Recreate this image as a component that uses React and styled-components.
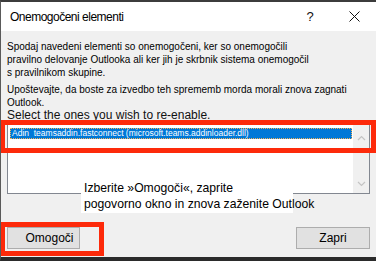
import React from 'react'
import styled, { createGlobalStyle } from 'styled-components'

const GlobalStyle = createGlobalStyle`
  html, body {
    margin: 0;
    padding: 0;
    background: #2b2b2b;
  }
  * { box-sizing: border-box; }
`

const Window = styled.div`
  width: 376px;
  height: 261px;
  display: flex;
  flex-direction: column;
  border-top: 2px solid #3c3c3c;
  border-left: 1px solid #5a5a5a;
  border-bottom: 4px solid #2b2b2b;
  background: #f0f0f0;
  overflow: hidden;
  position: relative;
`

const TitleBar = styled.div`
  height: 29px;
  flex-shrink: 0;
  background: #fff;
  display: flex;
  align-items: center;
  padding-left: 9px;
  font-family: "Liberation Sans", Arial, sans-serif;
  font-size: 12px;
  letter-spacing: -0.5px;
  color: #000;
`

const Title = styled.span`
  flex: 1;
`

const TitleButton = styled.span`
  width: 44px;
  height: 29px;
  display: flex;
  align-items: center;
  justify-content: center;
  font-size: 13px;
  letter-spacing: 0;
  color: #111;
`

const Body = styled.div`
  flex: 1;
  display: flex;
  flex-direction: column;
  padding: 9px 6px 0 6px;
  font-family: "Liberation Sans", Arial, sans-serif;
`

const Note = styled.p`
  margin: 0 0 4px;
  font-size: 10px;
  line-height: 13px;
  color: #000;
  &:last-of-type { margin-bottom: 0; }
`

const Prompt = styled.div`
  font-size: 12px;
  line-height: 13px;
  color: #111;
`

const ListBox = styled.div`
  position: relative;
  margin-top: 2px;
  height: 70px;
  background: #fff;
  border: 1px solid #828790;
  display: flex;
`

const Items = styled.div`
  flex: 1;
  padding: 3px 0 0 2px;
`

const Item = styled.div`
  height: 11px;
  background: ${p => (p.$selected ? '#0078d7' : 'transparent')};
  color: ${p => (p.$selected ? '#fff' : '#000')};
  outline: ${p => (p.$selected ? '1px dotted #f3b25a' : 'none')};
  outline-offset: -1px;
  font-size: 8.5px;
  line-height: 11px;
  padding-left: 2px;
  white-space: pre;
`

const ScrollBar = styled.div`
  width: 17px;
  background: #f0f0f0;
  display: flex;
  flex-direction: column;
  justify-content: space-between;
  align-items: center;
  padding: 10px 0 6px;
  border-left: 1px solid #fff;
`

const Highlight = styled.div`
  position: absolute;
  border: 5px solid #fd2a0a;
  pointer-events: none;
`

const Callout = styled.div`
  position: absolute;
  left: 73px;
  top: 55px;
  width: 212px;
  background: #fff;
  padding: 0 0 1px 3px;
  font-size: 12.2px;
  line-height: 16px;
  color: #000;
  white-space: nowrap;
`

const Footer = styled.div`
  display: flex;
  justify-content: space-between;
  margin-top: 33px;
`

const Button = styled.button`
  width: ${p => p.$w || 74}px;
  height: 22px;
  border: 1px solid #adadad;
  background: #e1e1e1;
  font-family: "Liberation Sans", Arial, sans-serif;
  font-size: 12px;
  color: #000;
  padding: 0 0 0 ${p => p.$shift || 0}px;
`

const Arrow = ({ up }) => (
  <svg width="9" height="6" viewBox="0 0 9 6">
    <path
      d={up ? 'M1 5 L4.5 1.5 L8 5' : 'M1 1 L4.5 4.5 L8 1'}
      fill="none"
      stroke="#c4c4c4"
      strokeWidth="1.2"
    />
  </svg>
)

export default function App() {
  return (
    <>
      <GlobalStyle />
      <Window>
        <TitleBar>
          <Title>Onemogočeni elementi</Title>
          <TitleButton>?</TitleButton>
          <TitleButton>
            <svg width="11" height="11" viewBox="0 0 11 11">
              <path d="M0.5 0.5 L10.5 10.5 M10.5 0.5 L0.5 10.5" stroke="#111" strokeWidth="1" />
            </svg>
          </TitleButton>
        </TitleBar>
        <Body>
          <Note>
            Spodaj navedeni elementi so onemogočeni, ker so onemogočili<br />
            pravilno delovanje Outlooka ali ker jih je skrbnik sistema onemogočil<br />
            s pravilnikom skupine.
          </Note>
          <Note>
            Upoštevajte, da boste za izvedbo teh sprememb morda morali znova zagnati<br />
            Outlook.
          </Note>
          <Prompt>Select the ones you wish to re-enable.</Prompt>
          <ListBox>
            <Items>
              <Item $selected>{'Adin  teamsaddin.fastconnect (microsoft.teams.addinloader.dll)'}</Item>
            </Items>
            <ScrollBar>
              <Arrow up />
              <Arrow />
            </ScrollBar>
            <Callout>
              Izberite »Omogoči«, zaprite<br />
              pogovorno okno in znova zaženite Outlook
            </Callout>
          </ListBox>
          <Footer>
            <Button $w={73} $shift={12}>Omogoči</Button>
            <Button>Zapri</Button>
          </Footer>
        </Body>
        <Highlight style={{ left: -1, top: 118, width: 376, height: 33 }} />
        <Highlight style={{ left: -1, top: 220, width: 104, height: 34 }} />
      </Window>
    </>
  )
}
